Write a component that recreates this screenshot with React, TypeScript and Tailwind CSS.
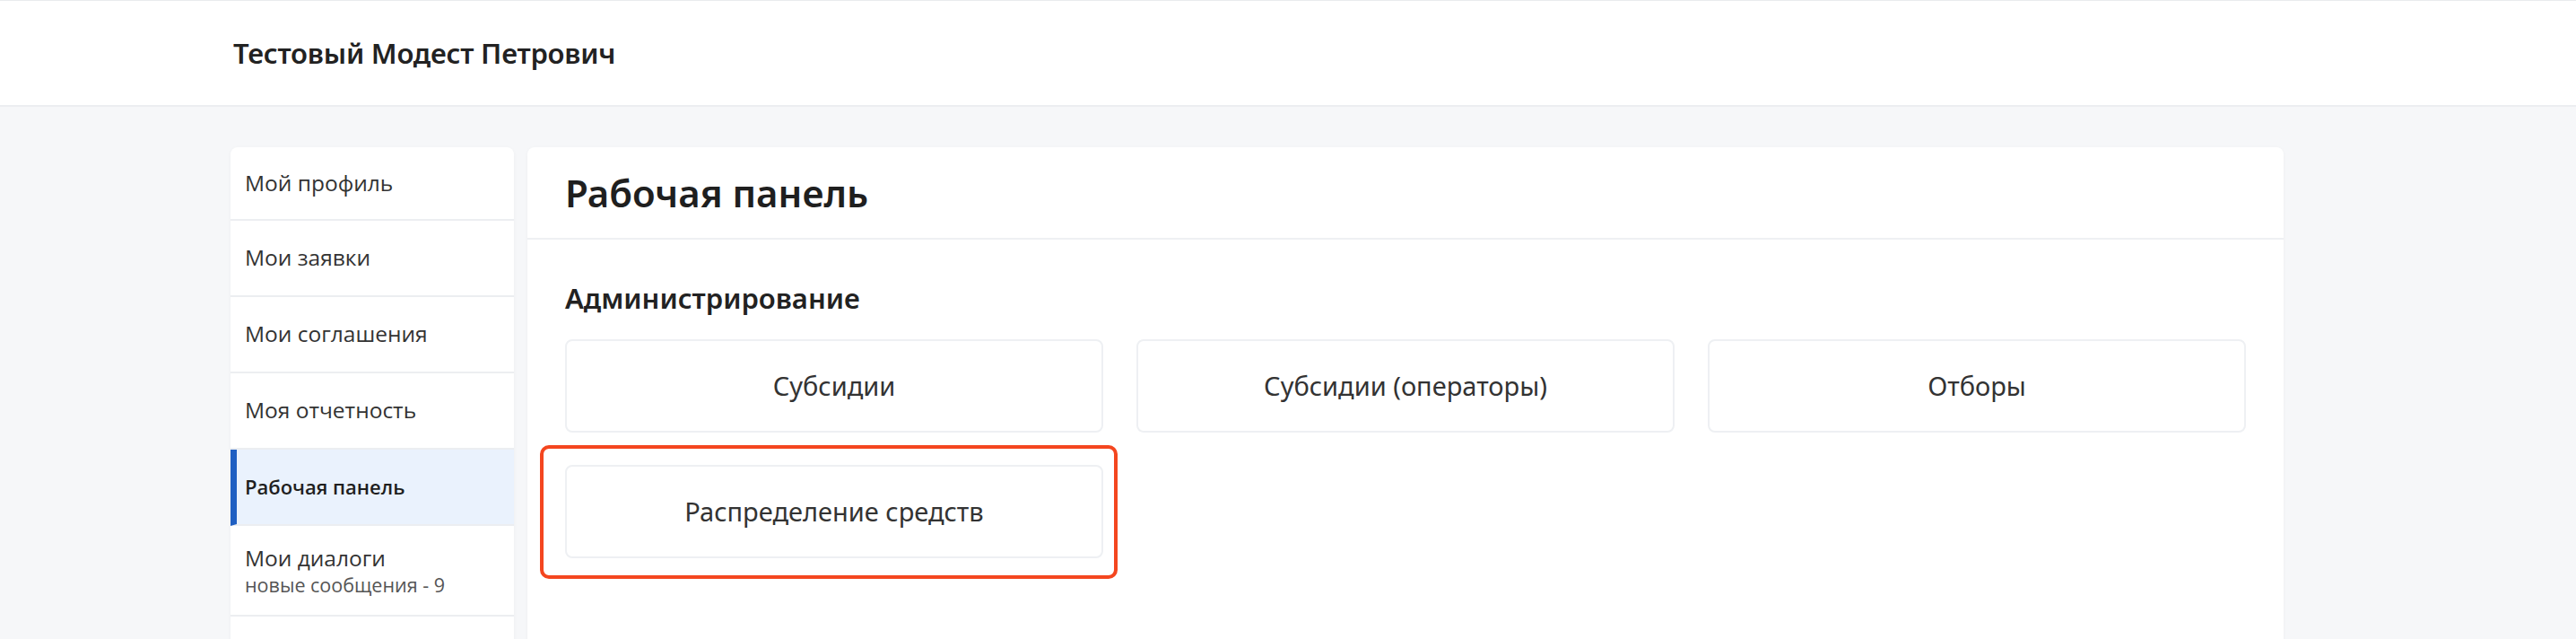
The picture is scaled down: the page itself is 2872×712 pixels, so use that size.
export default function App() {
  const menu = [
    { label: "Мой профиль", first: true },
    { label: "Мои заявки" },
    { label: "Мои соглашения" },
    { label: "Моя отчетность" },
    { label: "Рабочая панель", active: true },
  ]

  const tiles = ["Субсидии", "Субсидии (операторы)", "Отборы"]

  return (
    <div className="min-h-screen bg-[#f6f7f9] border-t border-[#e9ebee] font-['Noto_Sans',sans-serif] text-[#222]">
      {/* Top bar */}
      <header className="h-[118px] bg-white border-b-2 border-[#eceef1]">
        <div className="mx-auto w-[2358px] h-full flex items-center pl-[3px]">
          <span className="text-[31px] font-semibold tracking-[-0.2px]">Тестовый Модест Петрович</span>
        </div>
      </header>

      <div className="mx-auto w-[2358px] pt-[45px] flex items-start gap-[15px]">
        {/* Sidebar */}
        <aside className="w-[316px] min-h-[620px] bg-white rounded-[8px] shadow-[0_1px_4px_rgba(0,0,0,0.04)] overflow-hidden font-['Open_Sans',sans-serif]">
          {menu.map((m) =>
            m.active ? (
              <div
                key={m.label}
                className="h-[85px] flex items-center pl-[9px] border-l-[7px] border-[#1f5fc2] bg-[#eaf2fd] border-b-2 border-b-[#eceef1] text-[22px] font-semibold text-[#1f1f1f]"
              >
                {m.label}
              </div>
            ) : (
              <div
                key={m.label}
                className={
                  (m.first ? "h-[82px] " : "h-[85px] ") +
                  "flex items-center px-[16px] border-b-2 border-[#eceef1] text-[24.5px] text-[#333]"
                }
              >
                {m.label}
              </div>
            )
          )}
          <div className="h-[101px] flex flex-col justify-center px-[16px] border-b-2 border-[#eceef1]">
            <span className="text-[24.5px] leading-[32px] text-[#333]">Мои диалоги</span>
            <span className="text-[21.5px] leading-[28px] text-[#555]">новые сообщения - 9</span>
          </div>
        </aside>

        {/* Main panel */}
        <main className="w-[1958px] min-h-[620px] bg-white rounded-[8px] shadow-[0_1px_4px_rgba(0,0,0,0.04)]">
          <div className="h-[103px] flex items-center px-[42px] border-b-2 border-[#eef0f3]">
            <h1 className="text-[42px] font-semibold text-[#1f1f1f]">Рабочая панель</h1>
          </div>

          <div className="px-[42px] pt-[45px]">
            <h2 className="text-[31px] leading-[40px] font-semibold text-[#222]">Администрирование</h2>

            <div className="mt-[26px] grid grid-cols-3 gap-x-[37px] gap-y-[36px]">
              {tiles.map((t) => (
                <div
                  key={t}
                  className="h-[104px] flex items-center justify-center rounded-[8px] border-2 border-[#eef0f3] bg-white text-[29px] text-[#333]"
                >
                  {t}
                </div>
              ))}
              <div className="relative">
                <div className="h-[104px] flex items-center justify-center rounded-[8px] border-2 border-[#eef0f3] bg-white text-[29px] text-[#333]">
                  Распределение средств
                </div>
                {/* highlight annotation */}
                <div className="absolute -left-[28px] -right-[16px] -top-[22px] -bottom-[23px] rounded-[10px] border-[4px] border-[#f4461f] pointer-events-none" />
              </div>
            </div>
          </div>
        </main>
      </div>
    </div>
  )
}
